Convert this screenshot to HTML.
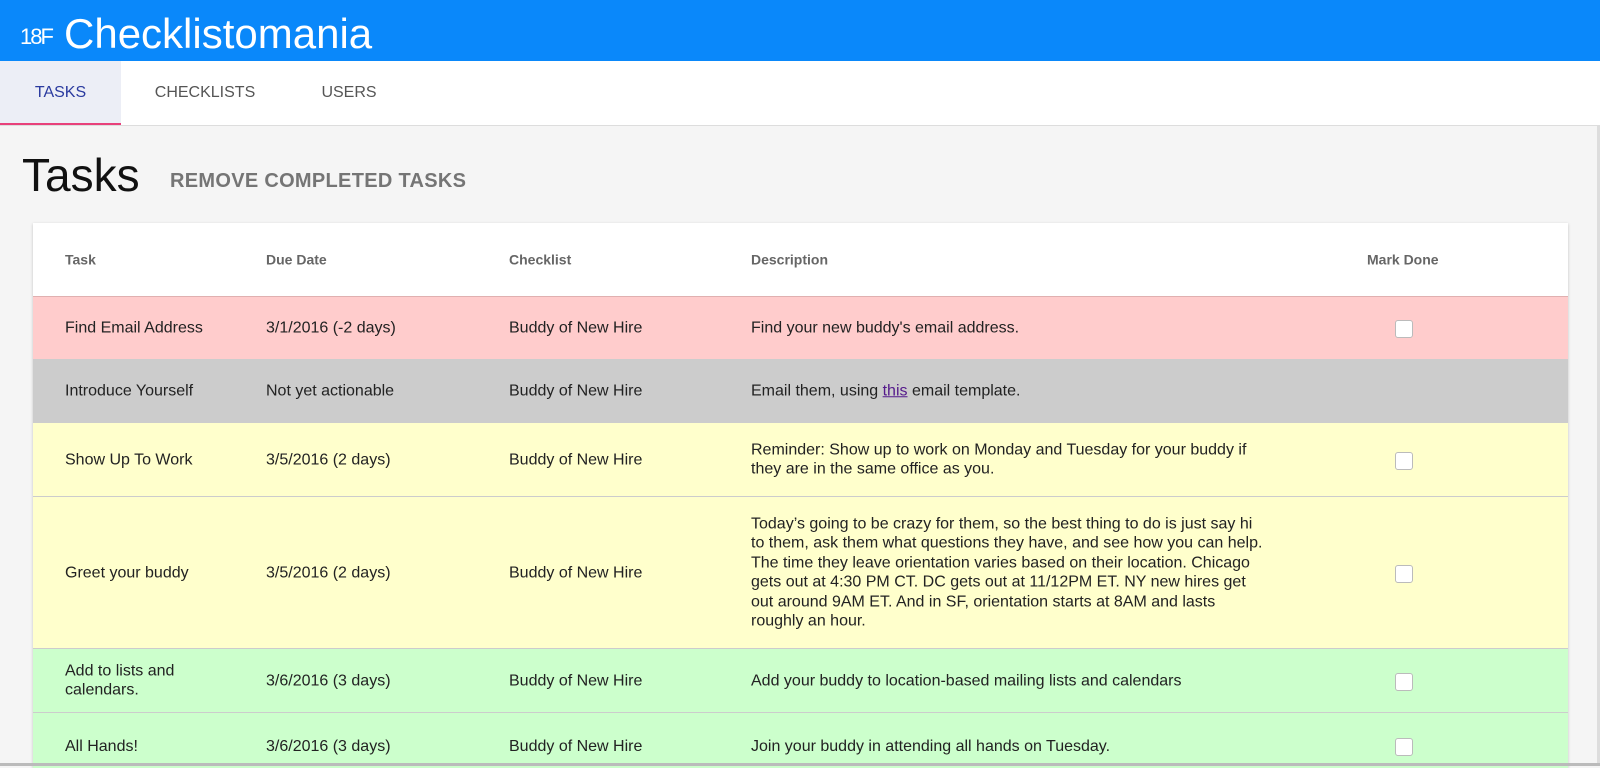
<!DOCTYPE html>
<html><head><style>
*{margin:0;padding:0;box-sizing:border-box}
body{width:1600px;height:766px;overflow:hidden;background:#f5f5f5;font-family:"Liberation Sans",sans-serif;position:relative}
.hdr{position:absolute;left:0;top:0;width:1600px;height:61px;background:#0a88fa;color:#fff}
.hdr .l{position:absolute;left:20px;top:24px;font-size:22px;letter-spacing:-2px;font-weight:300}
.hdr .t{position:absolute;left:64px;top:10px;font-size:42px}
.tabs{position:absolute;left:0;top:61px;width:1600px;height:65px;background:#fff;border-bottom:1px solid #ddd}
.tab{position:absolute;top:0;height:64px;line-height:64px;font-size:16px;color:#555;text-align:center}
.tab.a{background:#eceef6;color:#2a3a9f;border-bottom:2px solid #e8407a}
h1{position:absolute;left:22px;top:148px;font-size:46px;font-weight:normal;color:#111}
.rm{position:absolute;left:170px;top:170px;font-size:20px;color:#757575;font-weight:bold;letter-spacing:.3px}
.card{position:absolute;left:33px;top:223px;width:1535px;height:545px;background:#fff;box-shadow:0 1px 3px rgba(0,0,0,.2);overflow:hidden}
.row{position:absolute;left:0;width:1535px;border-top:1px solid #ccc;font-size:16px;color:#222}
.c{position:absolute;top:50%;transform:translateY(-50%);line-height:19.5px}
.th{font-size:14px;font-weight:bold;color:#666}
.cb{position:absolute;left:1362px;top:50%;margin-top:-8px;width:18px;height:18px;border:1px solid #bbb;border-radius:3px;background:#fff}
.edge{position:absolute;left:1597px;top:126px;width:3px;height:640px;background:#ddd}
.bot{position:absolute;left:0;top:763px;width:1600px;height:3px;background:#bbb}
</style></head><body>
<div class="hdr"><div class="l">18F</div><div class="t">Checklistomania</div></div>
<div class="tabs">
<div class="tab a" style="left:0;width:121px">TASKS</div>
<div class="tab" style="left:121px;width:168px">CHECKLISTS</div>
<div class="tab" style="left:289px;width:120px">USERS</div>
</div>
<h1>Tasks</h1>
<div class="rm">REMOVE COMPLETED TASKS</div>
<div class="card">
<div class="row th" style="top:0;height:73px;border-top:none">
<div class="c" style="left:32px">Task</div><div class="c" style="left:233px">Due Date</div><div class="c" style="left:476px">Checklist</div><div class="c" style="left:718px">Description</div><div class="c" style="left:1334px">Mark Done</div></div>
<div class="row" style="top:73px;height:63px;background:#ffcccc;border-top-color:#e0b0b0">
<div class="c" style="left:32px">Find Email Address</div><div class="c" style="left:233px">3/1/2016 (-2 days)</div><div class="c" style="left:476px">Buddy of New Hire</div><div class="c" style="left:718px">Find your new buddy's email address.</div><div class="cb"></div></div>
<div class="row" style="top:136px;height:63px;background:#cccccc">
<div class="c" style="left:32px">Introduce Yourself</div><div class="c" style="left:233px">Not yet actionable</div><div class="c" style="left:476px">Buddy of New Hire</div><div class="c" style="left:718px">Email them, using <u style="color:#551a8b">this</u> email template.</div></div>
<div class="row" style="top:199px;height:74px;background:#ffffcc">
<div class="c" style="left:32px">Show Up To Work</div><div class="c" style="left:233px">3/5/2016 (2 days)</div><div class="c" style="left:476px">Buddy of New Hire</div><div class="c" style="left:718px;width:530px">Reminder: Show up to work on Monday and Tuesday for your buddy if they are in the same office as you.</div><div class="cb"></div></div>
<div class="row" style="top:273px;height:152px;background:#ffffcc">
<div class="c" style="left:32px">Greet your buddy</div><div class="c" style="left:233px">3/5/2016 (2 days)</div><div class="c" style="left:476px">Buddy of New Hire</div><div class="c" style="left:718px;width:540px">Today’s going to be crazy for them, so the best thing to do is just say hi<br>to them, ask them what questions they have, and see how you can help.<br>The time they leave orientation varies based on their location. Chicago<br>gets out at 4:30 PM CT. DC gets out at 11/12PM ET. NY new hires get<br>out around 9AM ET. And in SF, orientation starts at 8AM and lasts<br>roughly an hour.</div><div class="cb"></div></div>
<div class="row" style="top:425px;height:64px;background:#ccffcc">
<div class="c" style="left:32px;width:160px">Add to lists and calendars.</div><div class="c" style="left:233px">3/6/2016 (3 days)</div><div class="c" style="left:476px">Buddy of New Hire</div><div class="c" style="left:718px">Add your buddy to location-based mailing lists and calendars</div><div class="cb"></div></div>
<div class="row" style="top:489px;height:66px;background:#ccffcc">
<div class="c" style="left:32px;top:24px;transform:none">All Hands!</div><div class="c" style="left:233px;top:24px;transform:none">3/6/2016 (3 days)</div><div class="c" style="left:476px;top:24px;transform:none">Buddy of New Hire</div><div class="c" style="left:718px;top:24px;transform:none">Join your buddy in attending all hands on Tuesday.</div><div class="cb" style="top:25px;margin-top:0"></div></div>
</div>
<div class="edge"></div><div class="bot"></div>
</body></html>
